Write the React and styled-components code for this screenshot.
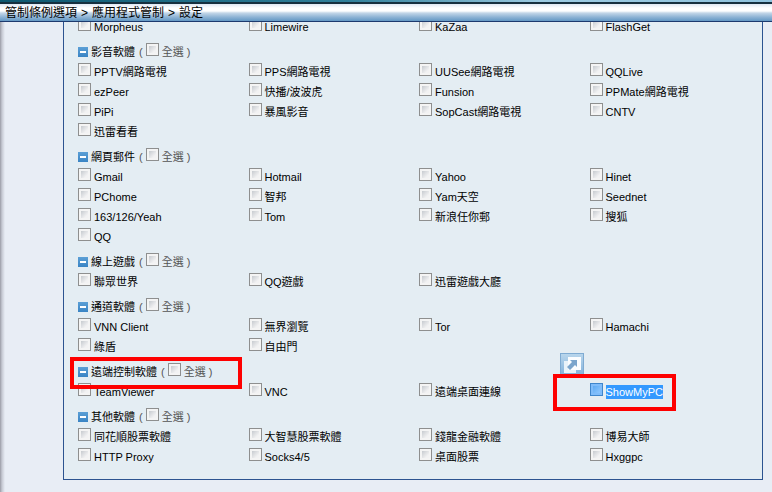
import { useState } from "react";
import styled, { createGlobalStyle, css } from "styled-components";

const GlobalStyle = createGlobalStyle`
  * {
    box-sizing: border-box;
  }
  body {
    margin: 0;
    background: #e8edf5;
    color: #000;
    font-family: "Liberation Sans", "Noto Sans CJK TC", sans-serif;
    font-size: 11px;
    line-height: 20px;
  }
`;

const Header = styled.header`
  position: sticky;
  top: 0;
  z-index: 5;
  height: 22px;
  padding-top: 4px;
  background:
    linear-gradient(#16303f, #16303f) 0 2px / 100% 2px no-repeat,
    linear-gradient(90deg, #0e5870, #2f7f9a 45%, #9ccbe2 70%, #8fc3de) 0 0 / 100% 2px no-repeat,
    linear-gradient(#dfe8f3 0, #ffffff 4px, #ffffff 7px, #c3d6e8 9px, #8fb4d5 13px, #6398c4 17px) 0 4px / 100% 18px no-repeat;
  border-bottom: 1px solid #1d3a6e;
`;

const Breadcrumb = styled.nav`
  display: flex;
  gap: 4px;
  padding-left: 5px;
  font-size: 12px;
  line-height: 18px;
  white-space: nowrap;
`;

const Crumb = styled.a`
  color: inherit;
  text-decoration: none;
`;

const Page = styled.main`
  /* first row is scrolled a little under the header */
  margin-top: -5px;
  padding: 0 9px 12px 63px;
  background: linear-gradient(90deg, #9a9ca6, #c6c9d3 2px, #e8edf5 5px) 0 0 / 5px 100% no-repeat;
`;

const Panel = styled.div`
  padding: 0 2px 12px 14px;
  background: #e4edf3;
  border: 1px solid #2c5390;
  border-top: 0;
`;

const Group = styled.section`
  & + & {
    margin-top: 5px;
  }
`;

const GroupHead = styled.div`
  position: relative;
  display: flex;
  width: fit-content;
  height: 20px;
`;

const Toggle = styled.button`
  width: 10px;
  height: 10px;
  margin: 5px 3px 0 0;
  padding: 0;
  border: 0;
  background: linear-gradient(#5b9fd6, #3a84c4);
  display: flex;
  align-items: center;
  justify-content: center;

  &::before {
    content: "";
    width: 6px;
    height: 2px;
    background: #fff;
  }
`;

const GroupName = styled.h2`
  margin: 0 4px 0 0;
  font-size: 11px;
  font-weight: normal;
`;

const SelectAll = styled.span`
  display: flex;
  gap: 3px;
  color: #555;
`;

const Grid = styled.div`
  display: grid;
  grid-template-columns: repeat(4, 1fr);
`;

const Item = styled.div`
  position: relative;
  height: 20px;
`;

const Label = styled.label`
  display: inline-flex;
  gap: 3px;
  white-space: nowrap;
`;

const ItemText = styled.span`
  height: 14px;
  margin-top: 3px;
  line-height: 14px;
  ${(props) =>
    props.$selected &&
    css`
      background: #3399ff;
      color: #fff;
    `}
`;

const Check = styled.input`
  appearance: none;
  flex: none;
  width: 13px;
  height: 13px;
  margin: 1px 0 0;
  border: 1px solid ${(props) => (props.$selected ? "#3f86cc" : "#8e8f8f")};
  background: ${(props) =>
    props.$selected
      ? "linear-gradient(135deg, #5eaaf2, #8cc6ff) 2px 2px / 7px 7px no-repeat, #7fbcfa"
      : "linear-gradient(135deg, #c6cacf, #f2f2f3 75%) 2px 2px / 7px 7px no-repeat, #f4f4f4"};

  &:checked {
    background: #4b7fb5;
    box-shadow: inset 0 0 0 2px #f4f4f4;
  }
`;

const Mark = styled.span`
  position: absolute;
  border: 4px solid #fe0000;
  pointer-events: none;
  z-index: 2;
`;

const HeadMark = styled(Mark)`
  top: -5px;
  left: -8px;
  width: 172px;
  height: 32px;
`;

const ItemMark = styled(Mark)`
  top: -8px;
  left: -37px;
  width: 123px;
  height: 37px;
`;

const Accelerator = styled.button`
  position: absolute;
  top: -29px;
  left: -30px;
  width: 24px;
  height: 24px;
  padding: 0;
  border: 0;
  background: none;
  z-index: 1;

  svg {
    display: block;
  }
`;

const groups = [
  {
    id: "p2p",
    items: ["Morpheus", "Limewire", "KaZaa", "FlashGet"],
  },
  {
    id: "media",
    name: "影音軟體",
    items: [
      "PPTV網路電視", "PPS網路電視", "UUSee網路電視", "QQLive",
      "ezPeer", "快播/波波虎", "Funsion", "PPMate網路電視",
      "PiPi", "暴風影音", "SopCast網路電視", "CNTV",
      "迅雷看看",
    ],
  },
  {
    id: "mail",
    name: "網頁郵件",
    items: [
      "Gmail", "Hotmail", "Yahoo", "Hinet",
      "PChome", "智邦", "Yam天空", "Seednet",
      "163/126/Yeah", "Tom", "新浪任你郵", "搜狐",
      "QQ",
    ],
  },
  {
    id: "game",
    name: "線上遊戲",
    items: ["聯眾世界", "QQ遊戲", "迅雷遊戲大廳"],
  },
  {
    id: "tunnel",
    name: "通道軟體",
    items: ["VNN Client", "無界瀏覽", "Tor", "Hamachi", "綠盾", "自由門"],
  },
  {
    id: "remote",
    name: "遠端控制軟體",
    marked: true,
    items: ["TeamViewer", "VNC", "遠端桌面連線", "ShowMyPC"],
  },
  {
    id: "other",
    name: "其他軟體",
    items: [
      "同花順股票軟體", "大智慧股票軟體", "錢龍金融軟體", "博易大師",
      "HTTP Proxy", "Socks4/5", "桌面股票", "Hxggpc",
    ],
  },
];

const selectedItem = "ShowMyPC";

const AcceleratorIcon = () => (
  <svg width="24" height="24" viewBox="0 0 24 24">
    <defs>
      <linearGradient id="accel" x1="0" y1="0" x2="0" y2="1">
        <stop offset="0" stopColor="#b9d6ec" />
        <stop offset="1" stopColor="#7fb0da" />
      </linearGradient>
    </defs>
    <rect x="0.5" y="0.5" width="23" height="23" fill="url(#accel)" stroke="#7fabd2" />
    <path d="M4 8h4v8h8v4H4z" fill="#e9f3fa" />
    <path d="M8 4h13v13H8z" fill="#fbfdff" />
    <path d="M10 7h7v7l-2-2-5 5-3-3 5-5z" fill="#7ba5cc" />
  </svg>
);

export default function App() {
  const [checked, setChecked] = useState({});
  const [closed, setClosed] = useState({});

  const setAll = (items, value) =>
    setChecked((prev) => ({
      ...prev,
      ...Object.fromEntries(items.map((item) => [item, value])),
    }));

  return (
    <>
      <GlobalStyle />
      <Header>
        <Breadcrumb>
          <Crumb href="#options">管制條例選項</Crumb>
          <span>&gt;</span>
          <Crumb href="#apps">應用程式管制</Crumb>
          <span>&gt;</span>
          <span>設定</span>
        </Breadcrumb>
      </Header>
      <Page>
        <Panel>
          {groups.map((group) => (
            <Group key={group.id}>
              {group.name && (
                <GroupHead>
                  <Toggle
                    type="button"
                    aria-label={group.name}
                    aria-expanded={!closed[group.id]}
                    onClick={() => setClosed({ ...closed, [group.id]: !closed[group.id] })}
                  />
                  <GroupName>{group.name}</GroupName>
                  <SelectAll>
                    <span>(</span>
                    <Label>
                      <Check
                        type="checkbox"
                        checked={group.items.every((item) => !!checked[item])}
                        onChange={(e) => setAll(group.items, e.target.checked)}
                      />
                      <span>全選</span>
                    </Label>
                    <span>)</span>
                  </SelectAll>
                  {group.marked && <HeadMark />}
                </GroupHead>
              )}
              {!closed[group.id] && (
                <Grid>
                  {group.items.map((item) => (
                    <Item key={item}>
                      <Label>
                        <Check
                          type="checkbox"
                          $selected={item === selectedItem}
                          checked={!!checked[item]}
                          onChange={(e) => setAll([item], e.target.checked)}
                        />
                        <ItemText $selected={item === selectedItem}>{item}</ItemText>
                      </Label>
                      {item === selectedItem && (
                        <>
                          <Accelerator type="button" aria-label="ShowMyPC">
                            <AcceleratorIcon />
                          </Accelerator>
                          <ItemMark />
                        </>
                      )}
                    </Item>
                  ))}
                </Grid>
              )}
            </Group>
          ))}
        </Panel>
      </Page>
    </>
  );
}
